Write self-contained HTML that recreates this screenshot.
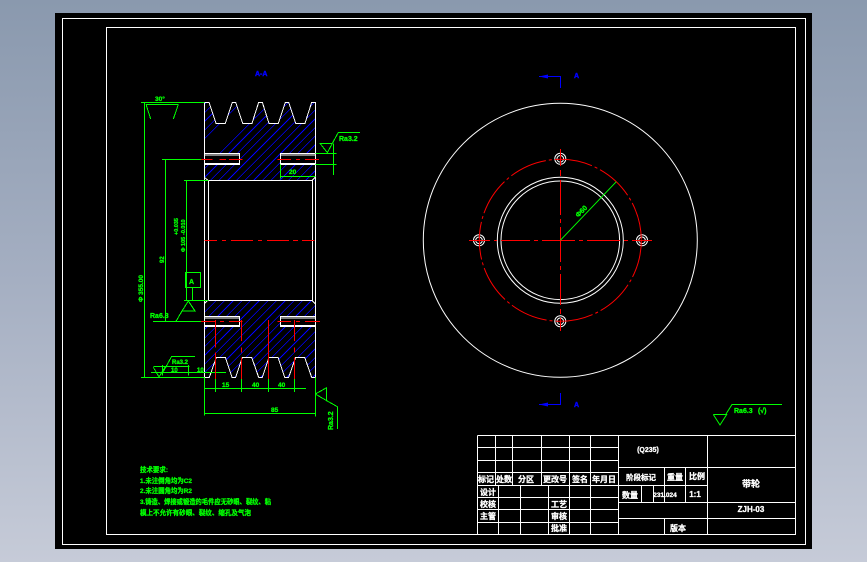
<!DOCTYPE html>
<html><head><meta charset="utf-8"><style>
html,body{margin:0;padding:0;width:867px;height:562px;overflow:hidden;background:linear-gradient(180deg,#8a99ae 0%,#a5afc2 50%,#c6cbd8 100%)}
svg{position:absolute;left:0;top:0}
text{font-family:"Liberation Sans","Noto Sans CJK SC",sans-serif;font-weight:700}
.g text{stroke:#00ff00;stroke-width:.3}
.w text{stroke:#fff;stroke-width:.3}
.b text{stroke:#0000ff;stroke-width:.4}
</style></head><body>
<svg width="867" height="562" viewBox="0 0 867 562" xmlns="http://www.w3.org/2000/svg">
<rect x="55" y="13" width="757" height="536" fill="#000"/>
<g fill="none" stroke="#fff" stroke-width="1" shape-rendering="crispEdges">
<rect x="62.5" y="18.5" width="743" height="526"/>
<rect x="106.5" y="27.5" width="689" height="507"/>
<path d="M477.5 435.5H795.5M477.5 447.5H618.5M477.5 460.5H618.5M477.5 472.5H618.5M477.5 485.5H664.5M477.5 497.5H618.5M477.5 509.5H618.5M477.5 522.5H618.5M618.5 467.5H795.5M618.5 485.5H707.5M618.5 502.5H795.5M618.5 518.5H795.5"/>
<path d="M477.5 435.5V534.5M495.5 435.5V485.5M512.5 435.5V485.5M541.5 435.5V485.5M569.5 435.5V534.5M590.5 435.5V534.5M618.5 435.5V534.5M707.5 435.5V534.5M498.5 485.5V534.5M520.5 485.5V534.5M548.5 485.5V534.5M664.5 467.5V502.5M685.5 467.5V502.5M641.5 485.5V502.5M653.5 485.5V502.5M664.5 518.5V534.5"/>
</g>
<g class="w" fill="#fff" font-size="8" text-anchor="middle">
<text x="648" y="452" font-size="7">(Q235)</text>
<text x="486" y="482">标记</text><text x="504" y="482">处数</text><text x="526" y="482">分区</text><text x="555" y="482">更改号</text><text x="580" y="482">签名</text><text x="604" y="482">年月日</text>
<text x="488" y="495">设计</text><text x="488" y="507">校核</text><text x="488" y="519">主管</text>
<text x="559" y="507">工艺</text><text x="559" y="519">审核</text><text x="559" y="531">批准</text>
<text x="641" y="480" font-size="7.5">阶段标记</text><text x="675" y="480">重量</text><text x="697" y="479">比例</text>
<text x="630" y="498">数量</text><text x="665" y="497" font-size="6.5">231.024</text><text x="695" y="497" font-weight="400" font-size="8">1:1</text>
<text x="751" y="487" font-size="9">带轮</text><text x="751" y="512" font-size="8">ZJH-03</text>
<text x="678" y="531">版本</text>
</g>
<g class="g" fill="#00ff00" font-size="6.6">
<text x="140" y="472" textLength="28" lengthAdjust="spacingAndGlyphs">技术要求:</text>
<text x="140" y="483" textLength="52" lengthAdjust="spacingAndGlyphs">1.未注倒角均为C2</text>
<text x="140" y="493" textLength="52" lengthAdjust="spacingAndGlyphs">2.未注圆角均为R2</text>
<text x="140" y="504" textLength="131" lengthAdjust="spacingAndGlyphs">3.铸造、焊接或锻造的毛件应无砂眼、裂纹、粘</text>
<text x="140" y="515" textLength="111" lengthAdjust="spacingAndGlyphs">模上不允许有砂眼、裂纹、缩孔及气泡</text>
</g>
<g transform="translate(120 60) scale(.33333)" fill="none" stroke-width="3">
<clipPath id="c"><path clip-rule="evenodd" d="M253 127H267L288 190H316L337 127H347L368 190H396L416 127H427L447 190H475L496 127H506L527 190H555L575 127H586V361H253ZM253 280H359V314H253ZM481 280H586V314H481Z"/><path clip-rule="evenodd" d="M253 721H586V952H575L554 892H527L506 952H494L474 892H447L427 952H416L395 892H367L347 952H336L316 892H289L268 952H253ZM253 769H359V800H253ZM481 769H586V800H481Z"/></clipPath>
<g clip-path="url(#c)"><path stroke="#0000ff" stroke-width="2.2" shape-rendering="crispEdges" d="M253 133L586 -200M253 159L586 -174M253 185L586 -148M253 211L586 -122M253 237L586 -96M253 327L586 -6M253 353L586 20M253 379L586 46M253 405L586 72M253 431L586 98M253 457L586 124M253 483L586 150M253 509L586 176M253 535L586 202M253 561L586 228M253 587L586 254M253 613L586 280M253 639L586 306M253 665L586 332M253 691L586 358M253 731L586 398M253 757L586 424M253 783L586 450M253 809L586 476M253 835L586 502M253 861L586 528M253 887L586 554M253 913L586 580M253 939L586 606M253 965L586 632M253 991L586 658M253 1017L586 684M253 1043L586 710M253 1069L586 736M253 1095L586 762M253 1121L586 788M253 1147L586 814M253 1173L586 840M253 1199L586 866M253 1225L586 892M253 1251L586 918M253 1277L586 944M253 1303L586 970"/></g>
<g stroke="#fff" shape-rendering="crispEdges">
<path d="M253 127H267L288 190H316L337 127H347L368 190H396L416 127H427L447 190H475L496 127H506L527 190H555L575 127H586V952H575L554 892H527L506 952H494L474 892H447L427 952H416L395 892H367L347 952H336L316 892H289L268 952H253Z"/>
<path d="M253 352L264 361H576L586 352M253 731L264 721H576L586 731M265 361V721M578 361V721"/>
<path d="M253 280H359V314H253M253 285H359M253 310H359M586 280H481V314H586M586 285H481M586 310H481M253 769H359V800H253M253 774H359M253 796H359M586 769H481V800H586M586 774H481M586 796H481"/>
</g>
<g stroke="#ff0000" shape-rendering="crispEdges">
<path d="M243 298H277M298 298H318M327 298H368M472 298H513M528 298H540M555 298H597"/>
<path d="M253 541H291M306 541H318M333 541H399M414 541H426M441 541H507M519 541H534M546 541H584"/>
<path d="M243 784H285M300 784H312M327 784H368M472 784H513M528 784H540M555 784H600"/>
</g>
<g stroke="#00ff00" shape-rendering="crispEdges">
<path d="M63 127H253M73 127V952M78 133H175M78 133L92 177M175 133L160 177"/>
<path d="M126 298H243M136 298V784M192 361H265M199 361V721M192 721H265"/>
<path d="M99 784H243M196 637H242V683H196ZM217 683V721M205 723L225 753H186L205 723M186 753L168 784"/>
<path d="M63 952H253M93 937H318M100 920H208M127 915V947M205 915V947M253 952V1067M586 952V1070M225 889H155L130 935M100 922L117 951L135 922M253 985H558M253 1060H586"/>
<path d="M720 217H655L622 278L600 250H637M586 280H650M586 314H650M640 250V345M481 314V355M481 349H586"/>
<path d="M586 1002L620 983V1022L586 1002M620 1022L652 1040V1107"/>
</g>
</g>
<path shape-rendering="crispEdges" fill="none" stroke="#ff0000" stroke-width="1" d="M215.5 320V347.5M215.5 352.5V379M241.5 320V341M241.5 347.5V352.5M241.5 357.5V379M268.5 320V379M294.5 320V341M294.5 347.5V352.5M294.5 357.5V379"/>
<path shape-rendering="crispEdges" fill="none" stroke="#00ff00" stroke-width="1" d="M215.5 379V392M241.5 379V392M268.5 379V392M294.5 379V392"/>
<g class="g" fill="#00ff00" font-size="7">
<text x="155" y="101" font-size="6.5">30°</text>
<text x="339" y="141" font-size="7">Ra3.2</text>
<text x="289" y="174" font-size="6.5">20</text>
<text transform="translate(143 302) rotate(-90)" font-size="6.5">Φ 355.00</text>
<text transform="translate(164 263) rotate(-90)" font-size="6">92</text>
<text transform="translate(185 252) rotate(-90)" font-size="5.5">Φ 105</text>
<text transform="translate(178 235) rotate(-90)" font-size="5.5">+0.035</text>
<text transform="translate(185 235) rotate(-90)" font-size="5.5">-0.010</text>
<text x="189" y="284" font-size="7">A</text>
<text x="150" y="318" font-size="7">Ra6.3</text>
<text x="172" y="364" font-size="6">Ra3.2</text>
<text x="171" y="372" font-size="6">10</text>
<text x="197" y="372" font-size="6">10</text>
<text x="222" y="387" font-size="6.5">15</text>
<text x="252" y="387" font-size="6.5">40</text>
<text x="278" y="387" font-size="6.5">40</text>
<text x="271" y="412" font-size="6.5">85</text>
<text transform="translate(333 430) rotate(-90)" font-size="7">Ra3.2</text>
<text transform="translate(583 213) rotate(-45)" font-size="7" text-anchor="middle">Φ60</text>
<text x="734" y="413" font-size="7">Ra6.3</text><text x="758" y="413" font-size="7" font-weight="400">(√)</text>
</g>
<g fill="none" stroke="#fff" stroke-width="1">
<circle cx="560.3" cy="240.3" r="137"/>
<circle cx="560.3" cy="240.3" r="63"/>
<circle cx="560.3" cy="240.3" r="59.3"/>
<circle cx="560.3" cy="158.8" r="5.5"/><circle cx="560.3" cy="158.8" r="3.3"/>
<circle cx="560.3" cy="321.3" r="5.5"/><circle cx="560.3" cy="321.3" r="3.3"/>
<circle cx="479" cy="240.3" r="5.5"/><circle cx="479" cy="240.3" r="3.3"/>
<circle cx="642" cy="240.3" r="5.5"/><circle cx="642" cy="240.3" r="3.3"/>
</g>
<g fill="none" stroke="#ff0000" stroke-width="1">
<circle cx="560.3" cy="240.3" r="81" stroke-dasharray="38 3 3 3"/>
<path shape-rendering="crispEdges" d="M469 240.5H490M494 240.5H497M501 240.5H530M534 240.5H538M542 240.5H575M579 240.5H583M587 240.5H620M624 240.5H628M632 240.5H652M560.5 149V166M560.5 170V176M560.5 180V215M560.5 219V223M560.5 227V262M560.5 266V270M560.5 274V305M560.5 309V314M560.5 318V331"/>
</g>
<path d="M560.3 240.3L616.3 181.7" stroke="#00ff00" stroke-width="1" fill="none"/>
<path d="M713.3 414.5H726.7L720 425L713.3 414.5M726 414L732 404.5H782" stroke="#00ff00" fill="none"/>
<g fill="none" stroke="#0000ff" stroke-width="1" shape-rendering="crispEdges">
<path d="M539 76.5H560.5V88M539 404.5H560.5V393"/>
</g>
<path d="M539 76.5L548 74.5V78.5ZM539 404.5L548 402.5V406.5Z" fill="#0000ff"/>
<g class="b" fill="#0000ff" font-size="7">
<text x="255" y="76">A-A</text><text x="574" y="78">A</text><text x="574" y="407">A</text>
</g>
</svg>
</body></html>
